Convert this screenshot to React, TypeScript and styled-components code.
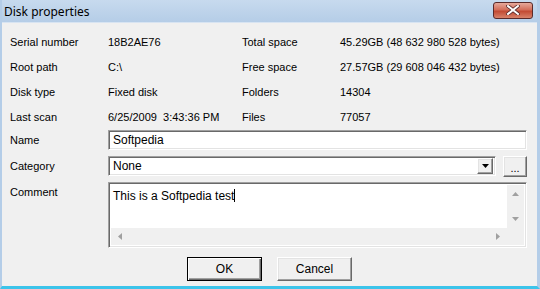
import React from 'react'
import styled, { createGlobalStyle } from 'styled-components'

const GlobalStyle = createGlobalStyle`
  html, body {
    margin: 0;
    padding: 0;
    background: #f0f0f0;
  }
  * {
    box-sizing: border-box;
  }
`

const Window = styled.div`
  width: 540px;
  height: 289px;
  display: flex;
  flex-direction: column;
  background: #f0f0f0;
  border-left: 2px solid #b4cde8;
  border-right: 3px solid #b4cde8;
  border-bottom: 3px solid #3cc4ea;
  font-family: 'Liberation Sans', Arial, sans-serif;
  font-size: 11px;
  color: #000;
  overflow: hidden;
`

const TitleBar = styled.div`
  height: 22px;
  flex-shrink: 0;
  display: flex;
  align-items: center;
  justify-content: space-between;
  padding: 0 7px 0 4px;
  margin-left: -2px;
  margin-right: -3px;
  background: linear-gradient(#c7daee, #b5cde7);
`

const Title = styled.span`
  font-family: 'Noto Sans', 'Liberation Sans', sans-serif;
  font-size: 12px;
  color: #000;
`

const CloseButton = styled.div`
  width: 40px;
  height: 17px;
  margin-top: -2px;
  border: 1px solid #5a2a2a;
  border-radius: 3px;
  background: linear-gradient(#e6a99b 0%, #d36e5a 45%, #c24a33 55%, #d8826a 100%);
  display: flex;
  align-items: center;
  justify-content: center;
`

const Body = styled.div`
  flex: 1;
  display: flex;
  flex-direction: column;
  padding: 6px 10px 0 8px;
  border-top: 1px solid #d8e4f2;
`

const InfoGrid = styled.div`
  display: grid;
  grid-template-columns: 98px 134px 98px 1fr;
  grid-auto-rows: 25px;
  align-items: center;
  height: 100px;
`

const Cell = styled.span`
  white-space: pre;
`

const FormRow = styled.div<{ $tall?: boolean; $first?: boolean }>`
  display: flex;
  align-items: flex-start;
  height: ${p => (p.$tall ? '66px' : '20px')};
  margin-top: ${p => (p.$first ? '1px' : '6px')};
`

const FieldLabel = styled.span`
  width: 98px;
  flex-shrink: 0;
  padding-top: 4px;
`

const sunken = `
  border-style: solid;
  border-width: 1px;
  border-color: #a0a0a0 #ffffff #ffffff #a0a0a0;
  box-shadow: inset 1px 1px 0 #696969, inset -1px -1px 0 #e3e3e3;
  background: #fff;
`

const TextBox = styled.div`
  ${sunken}
  flex: 1;
  height: 20px;
  padding: 3px 4px;
  line-height: 12px;
  font-size: 12px;
`

const SelectBox = styled.div`
  ${sunken}
  flex: 1;
  height: 20px;
  display: flex;
  align-items: center;
  justify-content: space-between;
  padding: 2px 2px 2px 4px;
  font-size: 12px;
`

const raised = `
  background: #f0f0f0;
  border-style: solid;
  border-width: 1px;
  border-color: #ffffff #696969 #696969 #ffffff;
  box-shadow: inset -1px -1px 0 #a0a0a0, inset 1px 1px 0 #e3e3e3;
`

const ArrowButton = styled.div`
  ${raised}
  width: 16px;
  height: 16px;
  display: flex;
  align-items: center;
  justify-content: center;
`

const SmallButton = styled.div`
  ${raised}
  width: 24px;
  height: 21px;
  margin-left: 7px;
  display: flex;
  align-items: flex-end;
  justify-content: center;
  padding-bottom: 4px;
  font-size: 11px;
  line-height: 8px;
`

const MemoBox = styled.div`
  ${sunken}
  flex: 1;
  height: 66px;
  display: grid;
  grid-template-columns: 1fr 17px;
  grid-template-rows: 1fr 17px;
  padding: 2px;
`

const MemoText = styled.div`
  padding: 4px 2px;
  font-size: 12px;
  line-height: 13px;
`

const Caret = styled.span`
  display: inline-block;
  width: 1px;
  height: 13px;
  background: #000;
  vertical-align: -2px;
`

const ScrollTrack = styled.div<{ $vertical?: boolean }>`
  background: #f0f0f0;
  display: flex;
  flex-direction: ${p => (p.$vertical ? 'column' : 'row')};
  justify-content: space-between;
  align-items: center;
  padding: ${p => (p.$vertical ? '7px 0' : '0 7px')};
`

const Corner = styled.div`
  background: #f0f0f0;
`

const ButtonRow = styled.div`
  display: flex;
  justify-content: center;
  gap: 15px;
  margin-top: 9px;
  padding-left: 2px;
`

const DialogButton = styled.div<{ $default?: boolean }>`
  width: 75px;
  height: 24px;
  display: flex;
  align-items: center;
  justify-content: center;
  font-size: 12px;
  background: #f0f0f0;
  border: 1px solid;
  border-color: ${p => (p.$default ? '#000' : '#fff #696969 #696969 #fff')};
  box-shadow: ${p =>
    p.$default
      ? 'inset 1px 1px 0 #fff, inset -1px -1px 0 #696969, inset -2px -2px 0 #a0a0a0'
      : 'inset -1px -1px 0 #a0a0a0, inset 1px 1px 0 #e3e3e3'};
`

const Arrow = ({ dir, color = '#000' }: { dir: 'up' | 'down' | 'left' | 'right'; color?: string }) => {
  const pts = {
    down: '0,0 7,0 3.5,4',
    up: '0,4 7,4 3.5,0',
    left: '4,0 4,7 0,3.5',
    right: '0,0 0,7 4,3.5',
  }[dir]
  const vertical = dir === 'up' || dir === 'down'
  return (
    <svg width={vertical ? 7 : 4} height={vertical ? 4 : 7} viewBox={vertical ? '0 0 7 4' : '0 0 4 7'}>
      <polygon points={pts} fill={color} />
    </svg>
  )
}

const info: [string, string, string, string][] = [
  ['Serial number', '18B2AE76', 'Total space', '45.29GB (48 632 980 528 bytes)'],
  ['Root path', 'C:\\', 'Free space', '27.57GB (29 608 046 432 bytes)'],
  ['Disk type', 'Fixed disk', 'Folders', '14304'],
  ['Last scan', '6/25/2009  3:43:36 PM', 'Files', '77057'],
]

export default function App() {
  return (
    <>
      <GlobalStyle />
      <Window>
        <TitleBar>
          <Title>Disk properties</Title>
          <CloseButton>
            <svg width="14" height="10" viewBox="0 0 14 10">
              <path d="M2 1 L12 9 M12 1 L2 9" stroke="#5a2a2a" strokeWidth="3.6" strokeLinecap="square" />
              <path d="M2 1 L12 9 M12 1 L2 9" stroke="#fff" strokeWidth="2" strokeLinecap="square" />
            </svg>
          </CloseButton>
        </TitleBar>
        <Body>
          <InfoGrid>
            {info.map(row =>
              row.map((c, i) => <Cell key={row[0] + i}>{c}</Cell>)
            )}
          </InfoGrid>
          <FormRow $first>
            <FieldLabel>Name</FieldLabel>
            <TextBox>Softpedia</TextBox>
          </FormRow>
          <FormRow>
            <FieldLabel>Category</FieldLabel>
            <SelectBox>
              None
              <ArrowButton>
                <Arrow dir="down" />
              </ArrowButton>
            </SelectBox>
            <SmallButton>...</SmallButton>
          </FormRow>
          <FormRow $tall>
            <FieldLabel>Comment</FieldLabel>
            <MemoBox>
              <MemoText>
                This is a Softpedia test<Caret />
              </MemoText>
              <ScrollTrack $vertical>
                <Arrow dir="up" color="#a0a0a0" />
                <Arrow dir="down" color="#a0a0a0" />
              </ScrollTrack>
              <ScrollTrack>
                <Arrow dir="left" color="#a0a0a0" />
                <Arrow dir="right" color="#a0a0a0" />
              </ScrollTrack>
              <Corner />
            </MemoBox>
          </FormRow>
          <ButtonRow>
            <DialogButton $default>OK</DialogButton>
            <DialogButton>Cancel</DialogButton>
          </ButtonRow>
        </Body>
      </Window>
    </>
  )
}
